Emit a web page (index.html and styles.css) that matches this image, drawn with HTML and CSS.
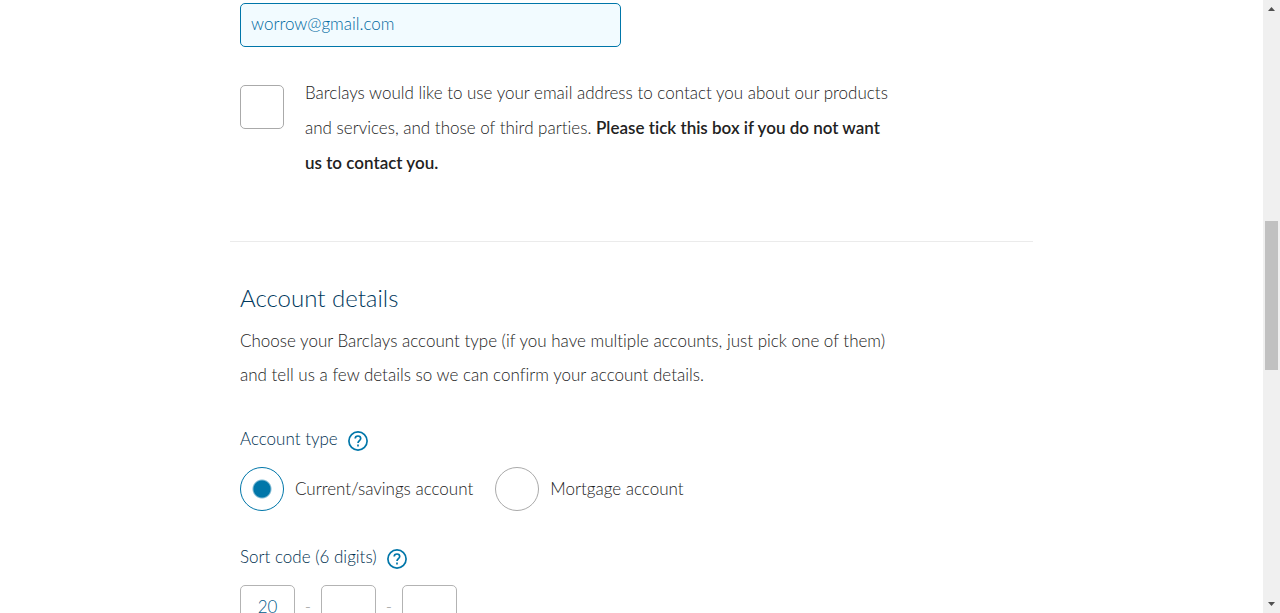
FILE: index.html
```html
<!DOCTYPE html>
<html lang="en">
<head>
<meta charset="utf-8">
<meta name="viewport" content="width=device-width, initial-scale=1">
<title>Account details</title>
<link rel="stylesheet" href="styles.css">
</head>
<body>
<main class="page">
  <form class="form">
    <section class="contact">
      <input class="field email" type="email" aria-label="Email address" value="worrow@gmail.com">
      <div class="consent">
        <input class="tick" type="checkbox" id="optout">
        <label class="consent-text" for="optout">Barclays would like to use your email address to contact you about our products and services, and those of third parties. <strong>Please tick this box if you do not want us to contact you.</strong></label>
      </div>
    </section>
    <section class="account">
      <h2 class="title">Account details</h2>
      <p class="intro">Choose your Barclays account type (if you have multiple accounts, just pick one of them) and tell us a few details so we can confirm your account details.</p>
      <fieldset class="group">
        <legend class="legend">
          <span>Account type</span>
          <button class="help" type="button" aria-label="Help with account type">
            <svg class="help-icon" viewBox="0 0 20 20" aria-hidden="true"><circle cx="10" cy="10" r="9.1"/><path d="M7.2 7.6C7.2 5.900 8.400 5 10 5s2.700 1 2.700 2.500c0 2-2.700 2.300-2.700 4.600"/><path d="M10 13.500v2"/></svg>
          </button>
        </legend>
        <div class="options">
          <label class="option"><input class="radio" type="radio" name="type" checked><span>Current/savings account</span></label>
          <label class="option"><input class="radio" type="radio" name="type"><span>Mortgage account</span></label>
        </div>
      </fieldset>
      <fieldset class="group">
        <legend class="legend">
          <span>Sort code (6 digits)</span>
          <button class="help" type="button" aria-label="Help with sort code">
            <svg class="help-icon" viewBox="0 0 20 20" aria-hidden="true"><circle cx="10" cy="10" r="9.1"/><path d="M7.2 7.6C7.2 5.900 8.400 5 10 5s2.700 1 2.700 2.500c0 2-2.700 2.300-2.700 4.600"/><path d="M10 13.500v2"/></svg>
          </button>
        </legend>
        <div class="sort">
          <input class="field pair" type="text" inputmode="numeric" maxlength="2" aria-label="First two digits" value="20">
          <span class="dash">-</span>
          <input class="field pair" type="text" inputmode="numeric" maxlength="2" aria-label="Middle two digits">
          <span class="dash">-</span>
          <input class="field pair" type="text" inputmode="numeric" maxlength="2" aria-label="Last two digits">
        </div>
      </fieldset>
    </section>
  </form>
</main>
<div class="scrollbar" aria-hidden="true">
  <svg class="arrow" viewBox="0 0 17 17"><path d="M5 11h7L8.500 7z"/></svg>
  <div class="track"><div class="thumb"></div></div>
  <svg class="arrow" viewBox="0 0 17 17"><path d="M5 6h7L8.500 10z"/></svg>
</div>
</body>
</html>
```
FILE: styles.css
```css
* {
  box-sizing: border-box;
}

body {
  margin: 0;
  height: 100vh;
  display: flex;
  overflow: hidden;
  background: #fff;
  color: #222;
  font: 300 17px/34px Lato, "Open Sans", sans-serif;
  font-variant-ligatures: none;
}

.page {
  flex: 1;
  min-width: 0;
  overflow: hidden;
}

.form {
  max-width: 803px;
  margin: 0 auto;
}

.contact {
  padding: 3px 10px 61px;
  border-bottom: 1px solid #ebebeb;
}

.field {
  height: 44px;
  border: 1px solid #b3b3b3;
  border-radius: 5px;
  background: #fff;
  color: #005a8a;
  font: inherit;
  line-height: 24px;
}

.email {
  display: block;
  width: 100%;
  max-width: 381px;
  padding: 0 10px 3px;
  border-color: #0076a9;
  background: #f2fbff;
  color: #0069a0;
}

.consent {
  display: flex;
  align-items: flex-start;
  gap: 21px;
  margin-top: 28px;
}

.tick,
.radio {
  appearance: none;
  flex: none;
  width: 44px;
  height: 44px;
  margin: 0;
  border: 1px solid #aaa;
  background: #fff;
}

.tick {
  margin-top: 10px;
  border-radius: 5px;
}

.consent-text {
  max-width: 594px;
  line-height: 35px;
}

.consent-text strong {
  font-weight: 600;
}

.account {
  padding: 39px 10px 0;
}

.title {
  margin: 0;
  color: #00395d;
  font-size: 24px;
  font-weight: 300;
  line-height: 34px;
}

.intro {
  max-width: 660px;
  margin: 9px 0 30px;
}

.group {
  min-width: 0;
  margin: 0 0 29px;
  padding: 0;
  border: 0;
}

.legend {
  display: flex;
  align-items: center;
  gap: 10px;
  padding: 0;
  color: #00304f;
}

.help {
  display: block;
  width: 20px;
  height: 20px;
  margin-top: 3px;
  padding: 0;
  border: 0;
  background: none;
}

.help-icon {
  display: block;
  fill: none;
  stroke: #0076a9;
  stroke-width: 1.7;
}

.options {
  display: flex;
  gap: 22px;
  margin-top: 11px;
}

.option {
  display: flex;
  align-items: center;
  gap: 11px;
}

.radio {
  border-radius: 50%;
}

.radio:checked {
  border-color: #0076a9;
  background: radial-gradient(circle, #0076a9 8px, #fff 10px);
}

.sort {
  display: flex;
  align-items: center;
  margin-top: 11px;
}

.pair {
  width: 55px;
  padding: 0 0 2px;
  text-align: center;
}

.dash {
  width: 26px;
  color: #999;
  text-align: center;
}

.scrollbar {
  display: flex;
  flex-direction: column;
  width: 17px;
  background: #f0f0f0;
}

.arrow {
  width: 17px;
  height: 17px;
  fill: #505050;
}

.track {
  flex: 1;
  padding: 204px 2px 0;
}

.thumb {
  height: 149px;
  background: #c1c1c1;
}
```
